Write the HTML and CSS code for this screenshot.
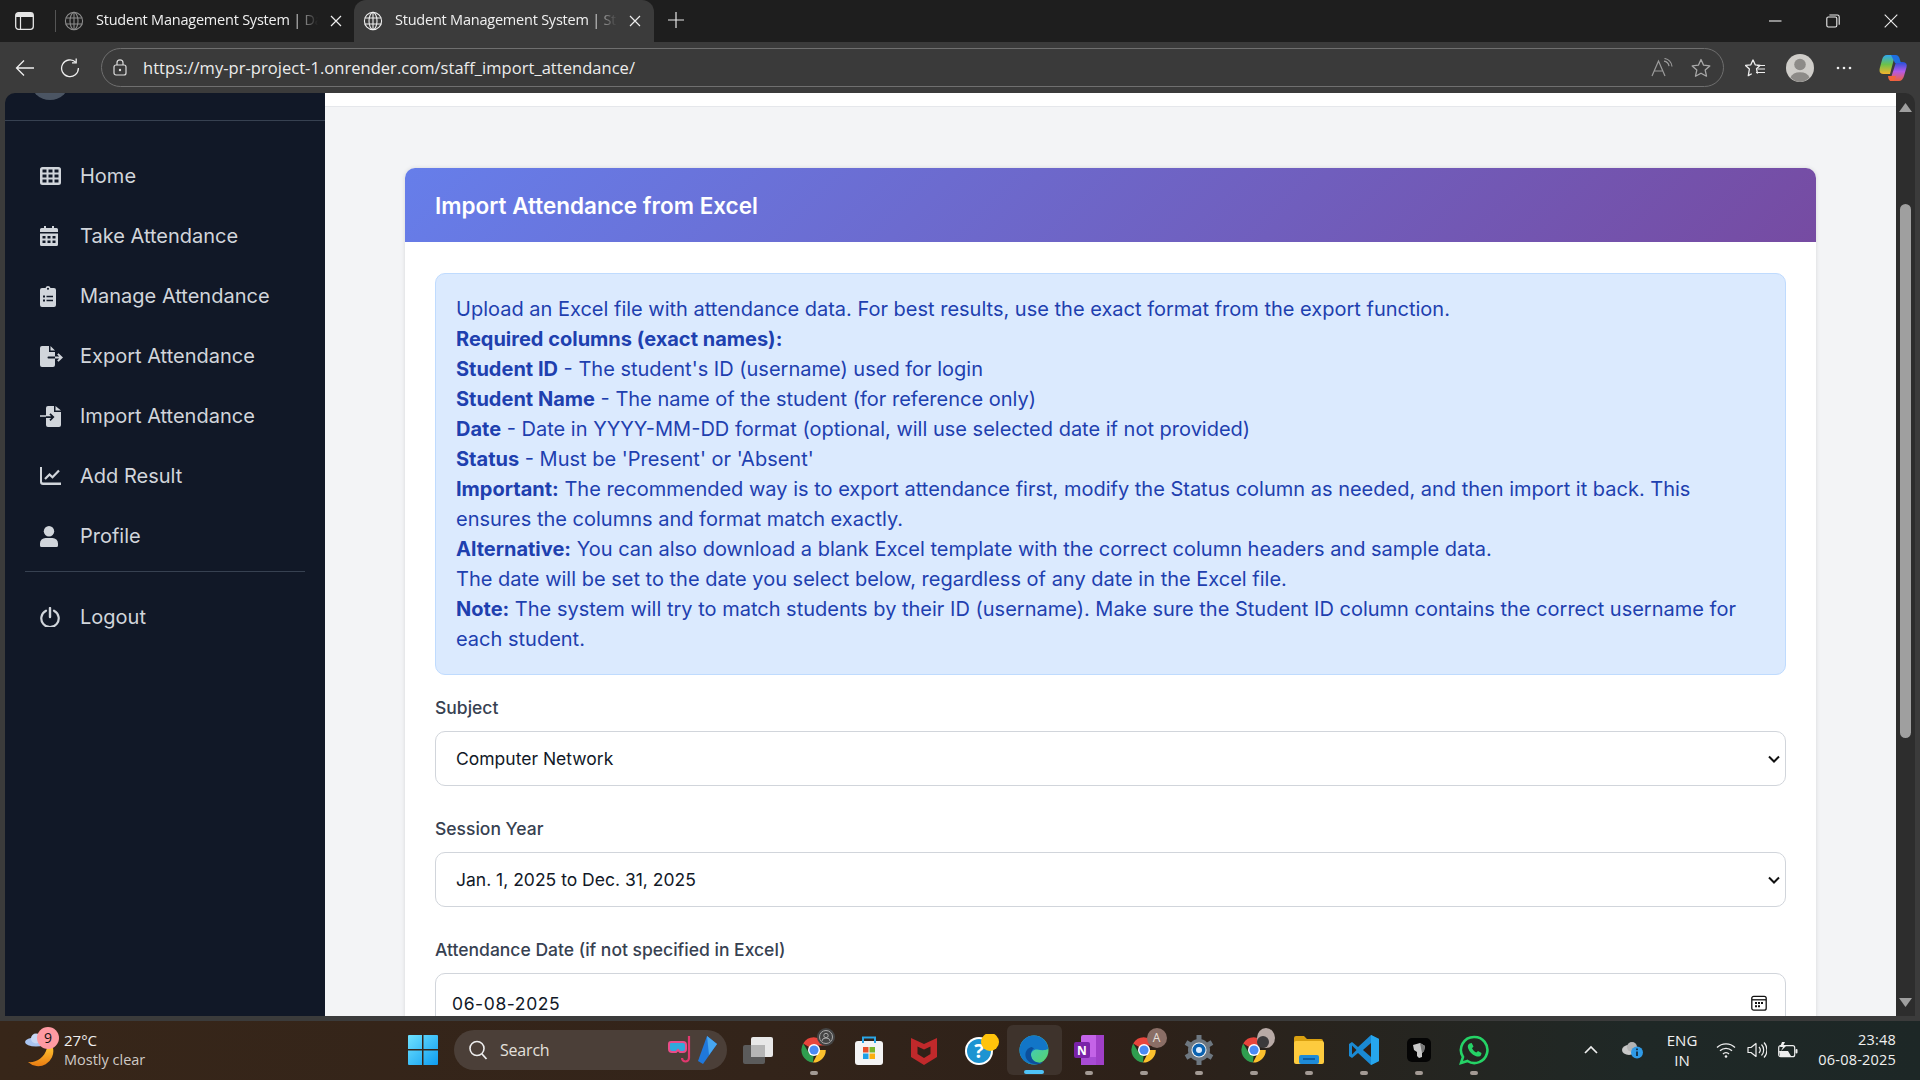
FILE: index.html
```html
<!DOCTYPE html>
<html lang="en">
<head>
<meta charset="utf-8">
<title>Student Management System | Staff Import Attendance</title>
<link rel="stylesheet" href="styles.css">
</head>
<body>
<svg class="defs" width="0" height="0" aria-hidden="true">
  <defs>
    <symbol id="globe" viewBox="0 0 20 20"><g fill="none" stroke="currentColor" stroke-width="1.1"><circle cx="10" cy="10" r="8.6"/><ellipse cx="10" cy="10" rx="4" ry="8.6"/><path d="M1.6 7h16.8M1.6 13h16.8M10 1.4v17.2"/></g></symbol>
    <symbol id="x" viewBox="0 0 12 12"><path d="M1 1l10 10M11 1L1 11" fill="none" stroke="currentColor" stroke-width="1.2"/></symbol>
    <symbol id="chrome" viewBox="0 0 28 28">
      <path d="M14 14L3.2 7.5A12.6 12.6 0 0 1 25.8 9.5H14z" fill="#e8453c"/>
      <path d="M14 14h11.8A12.6 12.6 0 0 1 13 26.6L19 15z" fill="#fbc02d"/>
      <path d="M14 14l-1 12.6A12.6 12.6 0 0 1 3.2 7.5L9 17z" fill="#2f9e4f"/>
      <circle cx="14" cy="14" r="6" fill="#fff"/><circle cx="14" cy="14" r="4.6" fill="#4a8af4"/>
    </symbol>
  </defs>
</svg>

<header class="tabstrip">
  <svg class="ic-tabs" width="19" height="18" viewBox="0 0 19 18"><rect x=".7" y=".7" width="17.600" height="16.600" rx="2.800" fill="none" stroke="#e6e6e6" stroke-width="1.300"/><path d="M1 2.500A1.800 1.800 0 0 1 3 1h13a1.800 1.800 0 0 1 2 1.500V5H1z" fill="#e6e6e6"/><path d="M5.500 5v12" stroke="#e6e6e6" stroke-width="1.200"/></svg>
  <span class="tab-sep"></span>
  <div class="tab">
    <svg class="tab-globe dim" width="20" height="20"><use href="#globe"/></svg>
    <span class="tab-title">Student Management System | Dashboard</span>
    <svg class="tab-x" width="12" height="12"><use href="#x"/></svg>
  </div>
  <div class="tab active">
    <svg class="tab-globe" width="20" height="20"><use href="#globe"/></svg>
    <span class="tab-title">Student Management System | Staff Import</span>
    <svg class="tab-x" width="12" height="12"><use href="#x"/></svg>
  </div>
  <svg class="ic-plus" width="18" height="18" viewBox="0 0 18 18"><path d="M9 1v16M1 9h16" stroke="#e6e6e6" stroke-width="1.2"/></svg>
  <div class="winctl">
    <svg width="14" height="14" viewBox="0 0 14 14"><path d="M1 7h12.5" stroke="#eee" stroke-width="1.1"/></svg>
    <svg width="14" height="14" viewBox="0 0 14 14"><rect x=".8" y="3" width="10" height="10" rx="1.5" fill="none" stroke="#eee" stroke-width="1.1"/><path d="M3.4 1h8a1.8 1.8 0 0 1 1.8 1.8v8" fill="none" stroke="#eee" stroke-width="1.1"/></svg>
    <svg width="14" height="14" viewBox="0 0 14 14"><path d="M.7.7l12.6 12.6M13.3.7L.7 13.3" stroke="#eee" stroke-width="1.1"/></svg>
  </div>
</header>

<nav class="toolbar">
  <svg class="tb-back" width="20" height="20" viewBox="0 0 20 20"><path d="M19 10H1.5M9 2.5L1.5 10 9 17.5" fill="none" stroke="#eee" stroke-width="1.3"/></svg>
  <svg class="tb-reload" width="20" height="20" viewBox="0 0 20 20"><path d="M15.8 4.2A8.4 8.4 0 1 0 18.4 10" fill="none" stroke="#eee" stroke-width="1.3"/><path d="M16.2 .6v4.2H12" fill="none" stroke="#eee" stroke-width="1.3"/></svg>
  <div class="addr">
    <svg class="addr-lock" width="14" height="17" viewBox="0 0 14 17"><rect x="1" y="6" width="12" height="10" rx="2" fill="none" stroke="#ddd" stroke-width="1.2"/><path d="M4 6V3.8a3 3 0 0 1 6 0V6" fill="none" stroke="#ddd" stroke-width="1.2"/><circle cx="7" cy="11" r="1.2" fill="#ddd"/></svg>
    <span class="addr-url">https://my-pr-project-1.onrender.com/staff_import_attendance/</span>
    <svg class="addr-read" width="22" height="20" viewBox="0 0 22 20"><path d="M1 18L7.5 3 14 18M3.5 13h8" fill="none" stroke="#9b9b9b" stroke-width="1.2"/><path d="M13 3.2a6 6 0 0 1 5 5M13.500 .5a9 9 0 0 1 7.500 8" fill="none" stroke="#9b9b9b" stroke-width="1.2"/></svg>
    <svg class="addr-star" width="20" height="20" viewBox="0 0 20 20"><path d="M10 1.500l2.600 5.700 6.200.7-4.600 4.200 1.300 6.100L10 15.200l-5.500 3 1.300-6.100L1.200 7.900l6.200-.7z" fill="none" stroke="#a8a8a8" stroke-width="1.300" stroke-linejoin="round"/></svg>
  </div>
  <svg class="tb-fav" width="20" height="20" viewBox="0 0 20 20"><path d="M8 1.800l2.200 5 5 .5-3.700 3.400 1 5M8 1.800L5.800 6.800l-5.300.6 3.900 3.600-1.100 6.600 3.500-1.900" fill="none" stroke="#eee" stroke-width="1.300" stroke-linejoin="round"/><path d="M12 7.500h8M12.500 11h7.500M11 14.500h9" stroke="#eee" stroke-width="1.200"/></svg>
  <svg class="tb-prof" width="28" height="28" viewBox="0 0 28 28"><circle cx="14" cy="14" r="14" fill="#cfcdc9"/><circle cx="14" cy="10.500" r="5.800" fill="#8d8b88"/><path d="M4.500 23.500a10 7.500 0 0 1 19 0A14 14 0 0 1 14 28a14 14 0 0 1-9.500-4.500z" fill="#8d8b88"/></svg>
  <svg class="tb-dots" width="16" height="4" viewBox="0 0 16 4"><circle cx="2" cy="2" r="1.300" fill="#eee"/><circle cx="8" cy="2" r="1.300" fill="#eee"/><circle cx="14" cy="2" r="1.300" fill="#eee"/></svg>
  <svg class="tb-copilot" width="28" height="28" viewBox="0 0 28 28">
    <defs>
      <linearGradient id="cpA" x1="0" y1="0" x2="0" y2="1"><stop offset="0" stop-color="#2fa8f0"/><stop offset=".5" stop-color="#6cc24a"/><stop offset="1" stop-color="#f7b52c"/></linearGradient>
      <linearGradient id="cpB" x1="0" y1="0" x2="0" y2="1"><stop offset="0" stop-color="#2350d8"/><stop offset=".5" stop-color="#b35ae8"/><stop offset="1" stop-color="#f0603a"/></linearGradient>
    </defs>
    <path d="M8 1h8l-5 19H4.500Q-.5 20 .8 14L3 6Q4.200 1 8 1z" fill="url(#cpA)"/>
    <path d="M20 27h-9l6-19h6.500Q29 8 27.300 14L25 22Q23.500 27 20 27z" fill="url(#cpB)"/>
    <path d="M12 1h4.500Q20 1 21 6l1 3h-6z" fill="#1f6fe0"/>
    <path d="M9 22h8l-2 5h-3Q9.500 27 9 22z" fill="#f2643c"/>
  </svg>
</nav>

<div class="viewport">
  <aside class="sidebar">
    <div class="side-head"><span class="avatar"></span></div>
    <ul class="side-nav">
      <li class="side-item"><svg class="side-ic" width="21" height="18" viewBox="0 0 21 18"><path fill-rule="evenodd" d="M2.500 0h16A2.500 2.500 0 0 1 21 2.500v13a2.500 2.500 0 0 1-2.500 2.500h-16A2.500 2.500 0 0 1 0 15.500v-13A2.500 2.500 0 0 1 2.500 0zM2.500 2.500v3h4v-3zm6 0v3h4v-3zm6 0v3h4v-3zM2.500 7.500v3h4v-3zm6 0v3h4v-3zm6 0v3h4v-3zM2.500 12.500v3h4v-3zm6 0v3h4v-3zm6 0v3h4v-3z"/></svg><span>Home</span></li>
      <li class="side-item"><svg class="side-ic" width="18" height="20" viewBox="0 0 18 20"><path fill-rule="evenodd" d="M4 0h2v2h6V0h2v2h2.500A1.500 1.500 0 0 1 18 3.500V6H0V3.500A1.500 1.500 0 0 1 1.500 2H4zM0 7.500h18v11a1.500 1.500 0 0 1-1.500 1.500h-15A1.500 1.500 0 0 1 0 18.500zM2.500 10v2.500h3V10zm5 0v2.500h3V10zm5 0v2.500h3V10zm-10 4.500V17h3v-2.500zm5 0V17h3v-2.500zm5 0V17h3v-2.500z"/></svg><span>Take Attendance</span></li>
      <li class="side-item"><svg class="side-ic" width="16" height="21" viewBox="0 0 16 21"><path fill-rule="evenodd" d="M8 0a2.600 2.600 0 0 1 2.500 2H14a2 2 0 0 1 2 2v15a2 2 0 0 1-2 2H2a2 2 0 0 1-2-2V4a2 2 0 0 1 2-2h3.500A2.600 2.600 0 0 1 8 0zm0 1.800a1 1 0 1 0 .01 0zM3 9.500v2h2v-2zm3.500.3v1.400H13V9.800zM3 13.500v2h2v-2zm3.500.3v1.400H13v-1.400z"/></svg><span>Manage Attendance</span></li>
      <li class="side-item"><svg class="side-ic" width="23" height="21" viewBox="0 0 23 21"><path d="M2 0h7v6h6v4.500H8.500a1 1 0 0 0 0 2H15V19a2 2 0 0 1-2 2H2a2 2 0 0 1-2-2V2a2 2 0 0 1 2-2zM10.500 0L15 4.500h-4.500zM15 10.500h4.200l-2-2 1.300-1.300 4.500 4.300-4.500 4.300-1.300-1.300 2-2H15z"/></svg><span>Export Attendance</span></li>
      <li class="side-item"><svg class="side-ic" width="21" height="21" viewBox="0 0 21 21"><path d="M6 2a2 2 0 0 1 2-2h6v6h7v13a2 2 0 0 1-2 2H8a2 2 0 0 1-2-2v-7h5.200l-1.800 1.800 1.200 1.200 3.900-3.900-3.900-3.900-1.200 1.200 1.800 1.800H6zM15.500 0L21 4.500h-5.500zM0 9.200h6v1.600H0z"/></svg><span>Import Attendance</span></li>
      <li class="side-item"><svg class="side-ic" width="21" height="18" viewBox="0 0 21 18"><path d="M0 0h2v14.500a1 1 0 0 0 1 1h18V18H3a3 3 0 0 1-3-3z"/><path d="M5 12l4.500-4.500 3 2.800L19 3.500" fill="none" stroke="currentColor" stroke-width="2.200"/></svg><span>Add Result</span></li>
      <li class="side-item"><svg class="side-ic" width="18" height="21" viewBox="0 0 18 21"><circle cx="9" cy="5.200" r="5.200"/><path d="M5.500 12h7A5.500 5.500 0 0 1 18 17.500V19.500a1.500 1.500 0 0 1-1.500 1.500h-15A1.500 1.500 0 0 1 0 19.500v-2A5.500 5.500 0 0 1 5.500 12z"/></svg><span>Profile</span></li>
    </ul>
    <div class="side-div"></div>
    <div class="side-item"><svg class="side-ic" width="20" height="20" viewBox="0 0 20 20"><path d="M6 3.700a8.700 8.700 0 1 0 8 0" fill="none" stroke="currentColor" stroke-width="2.200" stroke-linecap="round"/><path d="M10 1v9" stroke="currentColor" stroke-width="2.400" stroke-linecap="round"/></svg><span>Logout</span></div>
  </aside>

  <main class="main">
    <div class="topbar"></div>
    <section class="card">
      <h1 class="card-head">Import Attendance from Excel</h1>
      <div class="card-body">
        <div class="alert">
          Upload an Excel file with attendance data. For best results, use the exact format from the export function.<br>
          <strong>Required columns (exact names):</strong><br>
          <strong>Student ID</strong> - The student's ID (username) used for login<br>
          <strong>Student Name</strong> - The name of the student (for reference only)<br>
          <strong>Date</strong> - Date in YYYY-MM-DD format (optional, will use selected date if not provided)<br>
          <strong>Status</strong> - Must be 'Present' or 'Absent'<br>
          <strong>Important:</strong> The recommended way is to export attendance first, modify the Status column as needed, and then import it back. This ensures the columns and format match exactly.<br>
          <strong>Alternative:</strong> You can also download a blank Excel template with the correct column headers and sample data.<br>
          The date will be set to the date you select below, regardless of any date in the Excel file.<br>
          <strong>Note:</strong> The system will try to match students by their ID (username). Make sure the Student ID column contains the correct username for each student.
        </div>
        <div class="field">
          <label class="label" for="subj">Subject</label>
          <select class="control pick" id="subj"><option>Computer Network</option></select>
        </div>
        <div class="field">
          <label class="label" for="sess">Session Year</label>
          <select class="control pick" id="sess"><option>Jan. 1, 2025 to Dec. 31, 2025</option></select>
        </div>
        <div class="field">
          <label class="label" for="date">Attendance Date (if not specified in Excel)</label>
          <div class="date-wrap">
            <input class="control date" id="date" type="text" value="06-08-2025">
            <svg class="date-ic" width="16" height="16" viewBox="0 0 16 16"><rect x=".8" y="1.300" width="14.400" height="13.900" rx="2" fill="none" stroke="#111" stroke-width="1.300"/><path d="M1 4.800h14" stroke="#111" stroke-width="1.300"/><path d="M4 7h2v2H4zM7 7h2v2H7zM10 7h2v2h-2zM4 10.200h2v2H4zM7 10.200h2v2H7z" fill="#111"/></svg>
          </div>
        </div>
      </div>
    </section>
  </main>

  <div class="scrollbar">
    <svg class="sb-up" width="13" height="9" viewBox="0 0 13 9"><path d="M6.500 0L13 9H0z" fill="#9f9f9f"/></svg>
    <span class="sb-thumb"></span>
    <svg class="sb-down" width="13" height="9" viewBox="0 0 13 9"><path d="M6.500 9L13 0H0z" fill="#9f9f9f"/></svg>
  </div>
</div>

<footer class="taskbar">
  <div class="tb-weather">
    <div class="wx-ic">
      <svg width="32" height="36" viewBox="0 0 32 36"><defs><linearGradient id="moon" x1="0" y1="0" x2="0" y2="1"><stop offset="0" stop-color="#ffc02e"/><stop offset="1" stop-color="#e97c12"/></linearGradient></defs><path d="M29 17a15 15 0 0 1-25 14c7 1 16-3 19-14z" fill="url(#moon)"/><ellipse cx="12" cy="11" rx="11" ry="4.500" fill="#a9c4f0"/><circle cx="12" cy="7.500" r="5" fill="#c7d8f5"/></svg>
      <span class="wx-badge">9</span>
    </div>
    <div class="wx-text"><span class="wx-temp">27°C</span><span class="wx-desc">Mostly clear</span></div>
  </div>
  <svg class="tb-win" width="30" height="30" viewBox="0 0 30 30">
    <defs><linearGradient id="win" x1="0" y1="0" x2="1" y2="1"><stop offset="0" stop-color="#6fe3ff"/><stop offset="1" stop-color="#0e9cf0"/></linearGradient></defs>
    <path d="M1 0h13v14H0V1a1 1 0 0 1 1-1zM15.500 0H29a1 1 0 0 1 1 1v13H15.500zM0 15.500h14V30H1a1 1 0 0 1-1-1zM15.500 15.500H30V29a1 1 0 0 1-1 1H15.500z" fill="url(#win)"/>
  </svg>
  <div class="tb-search">
    <svg width="22" height="22" viewBox="0 0 22 22"><circle cx="10" cy="9.500" r="7" fill="none" stroke="#eee" stroke-width="1.600"/><path d="M15 15l4.500 5" stroke="#eee" stroke-width="1.800"/></svg>
    <span class="tb-search-t">Search</span>
    <svg class="search-art" width="50" height="30" viewBox="0 0 50 30"><path d="M21 1v22a3.500 3.500 0 0 1-7 0" fill="none" stroke="#e0386e" stroke-width="2.200"/><path d="M3 7h12a3 3 0 0 1 3 3v4a3 3 0 0 1-3 3h-3l-2-2-2 2H4a3 3 0 0 1-3-3V9a2 2 0 0 1 2-2z" fill="#30a8dc" stroke="#ea4c89" stroke-width="2"/><path d="M39 1l10 8-14 20-5-3z" fill="#1f78dc"/><path d="M39 1l10 8-8 11z" fill="#47a6f0"/></svg>
  </div>
  <div class="tb-apps">
    <div class="app"><svg width="32" height="28" viewBox="0 0 32 28"><rect x="0" y="9" width="22" height="19" rx="2" fill="#5b5b5b"/><rect x="8" y="1" width="22" height="20" rx="2" fill="#e8e8e8"/><rect x="8" y="9" width="14" height="12" fill="#b5b5b5"/></svg></div>
    <div class="app dot"><svg width="28" height="28"><use href="#chrome"/></svg><svg class="app-badge" width="18" height="18" viewBox="0 0 18 18"><circle cx="9" cy="9" r="9" fill="#444"/><circle cx="9" cy="9" r="6.500" fill="none" stroke="#aaa"/><circle cx="9" cy="7.500" r="2.200" fill="none" stroke="#aaa"/><path d="M5 13a4 3 0 0 1 8 0" fill="none" stroke="#aaa"/></svg></div>
    <div class="app"><svg width="30" height="30" viewBox="0 0 30 30"><rect x="1" y="6" width="28" height="24" rx="3" fill="#f4f4f4"/><path d="M9 8V2.500h12V8" fill="none" stroke="#2aa6e6" stroke-width="2"/><rect x="9" y="12" width="5.500" height="5.500" fill="#e8502a"/><rect x="15.500" y="12" width="5.500" height="5.500" fill="#7bb52a"/><rect x="9" y="18.500" width="5.500" height="5.500" fill="#1fa0e8"/><rect x="15.500" y="18.500" width="5.500" height="5.500" fill="#fbb010"/></svg></div>
    <div class="app"><svg width="26" height="30" viewBox="0 0 26 30"><path d="M0 3l13 6 13-6v19l-13 8-13-8z" fill="#c0292b"/><path d="M6.500 11.500l6.500 3 6.500-3v7.500l-6.500 4-6.500-4z" fill="#2e2118"/></svg></div>
    <div class="app"><svg class="help-ic" width="36" height="32" viewBox="0 0 36 32"><circle cx="15" cy="17" r="14" fill="#fff"/><circle cx="15" cy="17" r="12" fill="#1d94d2"/><text class="help-q" x="15" y="24" text-anchor="middle">?</text><circle cx="26" cy="8" r="9" fill="#ffc30b"/></svg></div>
    <div class="app current">
      <svg width="30" height="30" viewBox="0 0 30 30"><defs><linearGradient id="edgeG" x1="0" y1="0" x2="1" y2="1"><stop offset="0" stop-color="#36c6e8"/><stop offset="1" stop-color="#58d468"/></linearGradient></defs><circle cx="15" cy="15" r="14.500" fill="url(#edgeG)"/><path d="M15 .5A14.500 14.500 0 0 0 .5 15c0 9 7 14.500 15 14.500 3 0 6-.8 8-2-6 1.500-11-1.500-11.500-7-.4-4 3-6.500 6.500-6 3 .4 6 1.500 10.800-.5C28.800 6 22 .5 15 .5z" fill="#1276c8"/><path d="M12.500 12c-4 1-6.500 4.500-6 9 .5 4 5 8.500 11.500 8.300 3-.3 5-1 6-2-7 1.500-11.500-2-12-7-.3-3 1-5.500 3-7z" fill="#0c4f9c"/></svg>
    </div>
    <div class="app dot"><svg width="30" height="30" viewBox="0 0 30 30"><rect x="7" y="0" width="23" height="30" rx="2" fill="#c463e8"/><rect x="22" y="0" width="8" height="30" fill="#a03fc8"/><rect x="7" y="22" width="15" height="8" fill="#a84bd4"/><rect x="0" y="7" width="16" height="16" rx="2" fill="#7a22a8"/><text class="one-n" x="8" y="20" text-anchor="middle">N</text></svg></div>
    <div class="app dot"><svg width="28" height="28"><use href="#chrome"/></svg><span class="app-badge letter">A</span></div>
    <div class="app dot"><svg width="30" height="30" viewBox="0 0 30 30"><circle cx="15" cy="15" r="11" fill="#6d7780"/><g stroke="#6d7780" stroke-width="5"><path d="M15 0v6M15 24v6M2 7.500l5 3M23 19.500l5 3M2 22.500l5-3M23 10.500l5-3"/></g><circle cx="15" cy="15" r="7.500" fill="#fff" opacity=".9"/><circle cx="15" cy="15" r="6.500" fill="#0a62b0"/><circle cx="15" cy="15" r="3" fill="#dcecff"/></svg></div>
    <div class="app dot"><svg width="28" height="28"><use href="#chrome"/></svg><svg class="app-badge" width="18" height="20" viewBox="0 0 18 20"><ellipse cx="9" cy="10" rx="9" ry="10" fill="#b8aaa6"/><ellipse cx="6" cy="14" rx="6" ry="6" fill="#3b3a3c"/></svg></div>
    <div class="app dot"><svg width="30" height="28" viewBox="0 0 30 28"><path d="M0 2a2 2 0 0 1 2-2h8l3 3h14a2 2 0 0 1 2 2v4H0z" fill="#d9a010"/><rect x="0" y="5" width="30" height="23" rx="2" fill="#fdcb3e"/><rect x="5" y="19" width="20" height="9" rx="2" fill="#1e8bd8"/><rect x="9" y="22" width="12" height="2" fill="#0c5ea4"/></svg></div>
    <div class="app dot"><svg width="30" height="30" viewBox="0 0 30 30"><path d="M22 0l8 4v22l-8 4-13-12-6 5-3-2v-12l3-2 6 5z" fill="#1a8ad4"/><path d="M22 0l8 4v22l-8 4z" fill="#26a6ee"/><path d="M22 8l-8 7 8 7z" fill="#2e2118"/><path d="M3 10.500v9l4.500-4.500z" fill="#2e2118"/></svg></div>
    <div class="app dot"><svg width="24" height="24" viewBox="0 0 24 24"><rect width="24" height="24" rx="5" fill="#050505"/><path d="M6 7l7-2 5 3-1 5-2 2v4l-3 1-2-2v-4l-3-2z" fill="#c9c9c9"/><path d="M13 5l5 3-1 5-2 2-1-5z" fill="#777"/></svg></div>
    <div class="app dot"><svg width="30" height="30" viewBox="0 0 30 30"><path d="M15 2a13 13 0 0 0-11 20L2 28l6.500-2A13 13 0 1 0 15 2z" fill="none" stroke="#25d366" stroke-width="2.600"/><path d="M10.500 8.500l2.200-.5 1.800 3.500-1.500 1.800c1 2 2.300 3.200 4.300 4.300l1.700-1.500 3.500 1.800-.5 2.400c-1 1.500-3 1.700-5.500.7-3.500-1.400-6-4-7.300-7.500-.8-2.200-.4-4 1.300-5z" fill="#25d366"/></svg></div>
  </div>
  <div class="tray">
    <svg class="tr-chev" width="14" height="9" viewBox="0 0 14 9"><path d="M1 8l6-6 6 6" fill="none" stroke="#eee" stroke-width="1.700"/></svg>
    <svg class="tr-cloud" width="22" height="18" viewBox="0 0 22 18"><ellipse cx="7" cy="9" rx="7" ry="5" fill="#c8c8c8"/><circle cx="10" cy="6" r="5" fill="#b4b4b4"/><circle cx="15" cy="11.500" r="6" fill="#2f9be8"/><rect x="14.200" y="10.500" width="1.600" height="4.500" fill="#10202c"/><rect x="14.200" y="7.500" width="1.600" height="1.700" fill="#10202c"/></svg>
    <div class="tr-lang"><span>ENG</span><span>IN</span></div>
    <svg class="tr-wifi" width="20" height="16" viewBox="0 0 20 16"><path d="M1 5.500a13 13 0 0 1 18 0M4 8.800a8.500 8.500 0 0 1 12 0M7 12a4 4 0 0 1 6 0" fill="none" stroke="#eee" stroke-width="1.300"/><circle cx="10" cy="14.500" r="1.300" fill="#eee"/></svg>
    <svg class="tr-vol" width="20" height="18" viewBox="0 0 20 18"><path d="M1 6.500h3L9 2.500v13l-5-4H1z" fill="none" stroke="#eee" stroke-width="1.200" stroke-linejoin="round"/><path d="M12 6a4.500 4.500 0 0 1 0 6M14.500 3.500a8 8 0 0 1 0 11M17 1.500a11 11 0 0 1 0 15" fill="none" stroke="#eee" stroke-width="1.200"/></svg>
    <svg class="tr-bat" width="20" height="16" viewBox="0 0 20 16"><rect x=".7" y="3.700" width="16" height="11" rx="2" fill="none" stroke="#eee" stroke-width="1.200"/><rect x="17.500" y="7" width="2" height="4.500" rx="1" fill="#eee"/><path d="M1 9h9l3 5H2z" fill="#eee"/><path d="M4 0L2 5h3L3 9l5-5H5l2-4z" fill="#eee"/></svg>
    <div class="tr-clock"><span>23:48</span><span>06-08-2025</span></div>
  </div>
</footer>
</body>
</html>
```
FILE: styles.css
```css
* { box-sizing: border-box; }
html, body { margin: 0; height: 100%; }
body {
  width: 1920px; height: 1080px; overflow: hidden;
  display: flex; flex-direction: column;
  background: #3b3b3b; color: #111;
  font-family: "Open Sans", "Noto Sans", sans-serif;
}
.defs { position: absolute; }

/* browser chrome */
.tabstrip { height: 42px; flex: none; background: #1e1e1e; display: flex; align-items: center; color: #eee; }
.ic-tabs { margin-left: 15px; flex: none; }
.tab-sep { width: 1px; height: 22px; background: #555; margin-left: 21px; flex: none; }
.tab { height: 42px; width: 298px; display: flex; align-items: center; padding-left: 8px; flex: none; border-radius: 12px 12px 0 0; }
.tab.active { background: #3b3b3b; width: 300px; padding-left: 9px; }
.tab-globe { flex: none; margin-right: 12px; }
.tab-globe.dim { color: #8c8c8c; }
.tab-title {
  width: 222px; flex: none; overflow: hidden; white-space: nowrap;
  font: 14.500px/20px "Open Sans", sans-serif; letter-spacing: -.22px; color: #f0f0f0;
  margin-top: -3px;
  -webkit-mask-image: linear-gradient(90deg, #000 88%, transparent);
  mask-image: linear-gradient(90deg, #000 88%, transparent);
}
.tab-x { margin-left: 12px; flex: none; color: #eee; }
.ic-plus { margin-left: 13px; margin-top: -2px; flex: none; }
.winctl { margin-left: auto; display: flex; gap: 44px; padding-right: 22px; }

.toolbar { height: 51px; flex: none; background: #3b3b3b; display: flex; align-items: center; }
.tb-back { margin-left: 15px; flex: none; }
.tb-reload { margin-left: 25px; flex: none; }
.addr { margin-left: 21px; width: 1623px; height: 39px; flex: none; border: 1px solid #6f6f6f; border-radius: 20px; display: flex; align-items: center; background: #3a3a3a; }
.addr-lock { margin-left: 11px; flex: none; }
.addr-url { margin-left: 16px; font: 16.500px "Open Sans", sans-serif; letter-spacing: .04px; color: #ececec; white-space: nowrap; }
.addr-read { margin-left: auto; flex: none; }
.addr-star { margin-left: 18px; margin-right: 12px; flex: none; }
.tb-fav { margin-left: 21px; flex: none; }
.tb-prof { margin-left: 21px; flex: none; }
.tb-dots { margin-left: 22px; flex: none; }
.tb-copilot { margin-left: 27px; flex: none; }

/* page */
.viewport { flex: none; height: 923px; display: flex; padding-left: 5px; padding-right: 5px; overflow: hidden; background: #3b3b3b; }
.sidebar { width: 320px; flex: none; background: #111827; color: #d1d5db; border-top-left-radius: 10px; font: 20px Inter, sans-serif; }
.side-head { height: 28px; border-bottom: 1px solid #374151; overflow: hidden; padding-left: 25px; }
.avatar { display: block; width: 40px; height: 40px; margin-top: -33px; border-radius: 50%; background: #4b5563; }
.side-nav { list-style: none; margin: 0; padding: 25px 0 0; }
.side-item { position: relative; height: 60px; display: flex; align-items: center; padding-left: 35px; color: #d1d5db; }
.side-ic { flex: none; fill: currentColor; }
.side-item span { position: absolute; left: 75px; }
.side-div { height: 1px; margin: 5px 20px 15px; background: #374151; }

.main { width: 1571px; flex: none; background: #f3f4f6; padding: 0 80px; }
.topbar { height: 14px; margin: 0 -80px 61px; background: #fff; border-bottom: 1px solid #e5e7eb; }
.card { background: #fff; border-radius: 10px; box-shadow: 0 0 4px rgba(0,0,0,.12); font-family: Inter, sans-serif; }
.card-head { margin: 0; height: 74px; padding: 0 30px; display: flex; align-items: center; color: #fff; font-size: 22.500px; font-weight: 600; border-radius: 10px 10px 0 0; background: linear-gradient(135deg, #667eea, #764ba2); }
.card-body { padding: 31px 30px 0; }
.alert { background: #dbeafe; border: 1px solid #bfdbfe; border-radius: 10px; padding: 20px; color: #1e40af; font-size: 20px; line-height: 30px; margin-bottom: 18px; }
.alert strong { font-weight: 700; }
.field { margin-bottom: 28px; }
.label { display: block; font-size: 17.500px; line-height: 30px; font-weight: 500; color: #374151; margin-bottom: 8px; }
.control { display: block; width: 100%; height: 55px; border: 1px solid #d1d5db; border-radius: 10px; padding: 0 16px; background: #fff; font: 17.500px Inter, sans-serif; color: #111827; }
.pick {
  appearance: none; -webkit-appearance: none; padding-left: 20px;
  background: #fff url("data:image/svg+xml,%3Csvg xmlns='http://www.w3.org/2000/svg' width='12' height='8' viewBox='0 0 12 8'%3E%3Cpath d='M1 1.500l5 5 5-5' fill='none' stroke='%23111' stroke-width='2'/%3E%3C/svg%3E") no-repeat right 5px center;
}
.date-wrap { position: relative; }
.date { padding: 5px 0 0 16px; letter-spacing: .6px; }
.date-ic { position: absolute; right: 19px; top: 22px; }

.scrollbar { width: 19px; flex: none; background: #2d2d2d; border-top-right-radius: 10px; display: flex; flex-direction: column; align-items: center; }
.sb-up { margin-top: 10px; flex: none; }
.sb-thumb { width: 11px; height: 534px; margin-top: 92px; border-radius: 6px; background: #9f9f9f; flex: none; }
.sb-down { margin-top: auto; margin-bottom: 9px; flex: none; }

/* taskbar */
.taskbar { height: 59px; margin-top: 5px; padding-bottom: 2px; flex: none; display: flex; align-items: center; background: linear-gradient(90deg, #372619 0, #33241a 40%, #2d2119 60%, #1f2826 85%, #1d2726 100%); color: #f0f0f0; font-family: "Open Sans", sans-serif; }
.tb-weather { width: 408px; flex: none; display: flex; align-items: center; padding-left: 24px; }
.wx-ic { position: relative; width: 40px; height: 38px; flex: none; }
.wx-badge { position: absolute; left: 13px; top: -4px; width: 22px; height: 22px; border-radius: 50%; background: #ff9aa2; color: #111; font-size: 14px; line-height: 22px; text-align: center; }
.wx-text { display: flex; flex-direction: column; }
.wx-temp { font-size: 15px; line-height: 20px; }
.wx-desc { font-size: 14.500px; line-height: 20px; color: #cfcac6; }
.tb-win { flex: none; }
.tb-search { margin-left: 16px; width: 273px; height: 40px; flex: none; border-radius: 20px; background: #4b3f38; display: flex; align-items: center; padding-left: 13px; }
.tb-search-t { margin-left: 11px; font-size: 16px; letter-spacing: -.2px; color: #e4e0dd; }
.search-art { margin-left: auto; margin-right: 9px; flex: none; }
.tb-apps { display: flex; margin-left: 4.500px; flex: none; }
.app { width: 55px; height: 50px; display: flex; align-items: center; justify-content: center; position: relative; flex: none; }
.app.dot::after { content: ""; position: absolute; left: 23px; bottom: 0; width: 8px; height: 4px; border-radius: 2px; background: #a39a94; }
.app.current { background: #3e332c; border-radius: 6px; }
.app.current::after { content: ""; position: absolute; left: 17px; bottom: 1px; width: 20px; height: 4px; border-radius: 2px; background: #4fc3f7; }
.app-badge { position: absolute; left: 30px; top: 3px; }
.app-badge.letter { width: 20px; height: 20px; border-radius: 50%; background: #8a6e66; color: #e8e0dc; font-size: 12px; line-height: 20px; text-align: center; }
.help-ic { margin-left: 6px; flex: none; }
.help-q { font: 700 20px "Open Sans", sans-serif; fill: #fff; }
.one-n { font: 700 12px "Open Sans", sans-serif; fill: #fff; }
.tray { margin-left: auto; display: flex; align-items: center; padding-right: 24px; }
.tr-chev, .tr-cloud, .tr-wifi, .tr-vol, .tr-bat { flex: none; }
.tr-cloud { margin-left: 24px; }
.tr-lang { margin-left: 23px; display: flex; flex-direction: column; align-items: center; font-size: 15px; line-height: 20px; }
.tr-wifi { margin-left: 19px; }
.tr-vol { margin-left: 11px; }
.tr-bat { margin-left: 11px; }
.tr-clock { margin-left: 20px; display: flex; flex-direction: column; align-items: flex-end; font-size: 14.500px; line-height: 20px; letter-spacing: .2px; }
```
